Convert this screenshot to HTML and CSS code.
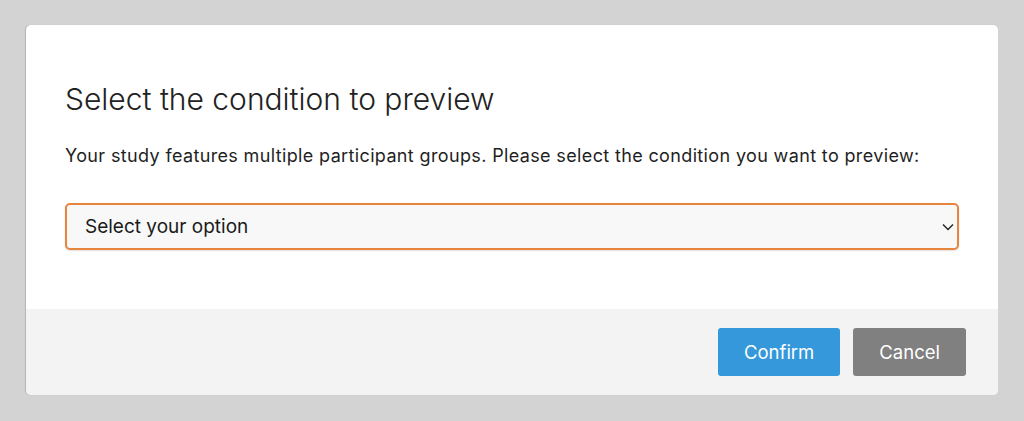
FILE: index.html
```html
<!DOCTYPE html>
<html lang="en">
<head>
<meta charset="UTF-8">
<meta name="viewport" content="width=device-width, initial-scale=1.0">
<title>Preview Condition</title>
<link rel="stylesheet" href="styles.css">
</head>
<body>
<div class="modal">
    <div class="modal-body">
        <h2 class="modal-title">Select the condition to preview</h2>
        <p class="modal-text">Your study features multiple participant groups. Please select the condition you want to preview:</p>
        <div class="select-wrap">
            <select class="condition-select">
                <option>Select your option</option>
            </select>
            <svg class="chevron" width="12" height="8" viewBox="0 0 12 8">
                <path d="M1 1.5 L6 6.5 L11 1.5" fill="none" stroke="#222" stroke-width="1.4"/>
            </svg>
        </div>
    </div>
    <div class="modal-footer">
        <button class="btn btn-confirm">Confirm</button>
        <button class="btn btn-cancel">Cancel</button>
    </div>
</div>
</body>
</html>
```

FILE: styles.css
```css
body {
    margin: 0;
    padding: 25px 26px 26px 26px;
    background-color: #d3d3d3;
    font-family: "Inter", "Liberation Sans", sans-serif;
    color: #1f1f1f;
}

.modal {
    background-color: #fff;
    border-radius: 5px;
    overflow: hidden;
    box-shadow: -1px 0 1px rgba(0, 0, 0, 0.15);
}

.modal-body {
    padding: 56px 39px 59px 39px;
}

.modal-title {
    margin: 0 0 27px 0;
    font-size: 30px;
    font-weight: 300;
    line-height: 36px;
    color: #222;
}

.modal-text {
    margin: 0 0 35px 0;
    font-size: 18px;
    letter-spacing: 0.36px;
    line-height: 24px;
}

.select-wrap {
    position: relative;
}

.condition-select {
    appearance: none;
    -webkit-appearance: none;
    width: 100%;
    height: 47px;
    padding: 0 40px 0 18px;
    font-family: inherit;
    font-size: 19px;
    color: #1a1a1a;
    background-color: #f8f8f8;
    border: 2px solid #e8853d;
    border-radius: 5px;
    box-shadow: 0 1px 2px rgba(0, 0, 0, 0.12);
}

.chevron {
    position: absolute;
    right: 5px;
    top: 20px;
}

.modal-footer {
    display: flex;
    justify-content: flex-end;
    gap: 13px;
    padding: 19px 32px 19px 32px;
    background-color: #f3f3f3;
}

.btn {
    height: 48px;
    padding: 0 26px;
    font-family: inherit;
    font-size: 18.5px;
    color: #fff;
    border: none;
    border-radius: 3px;
    cursor: pointer;
}

.btn-confirm {
    background-color: #3498db;
}

.btn-cancel {
    background-color: #808080;
}
```
